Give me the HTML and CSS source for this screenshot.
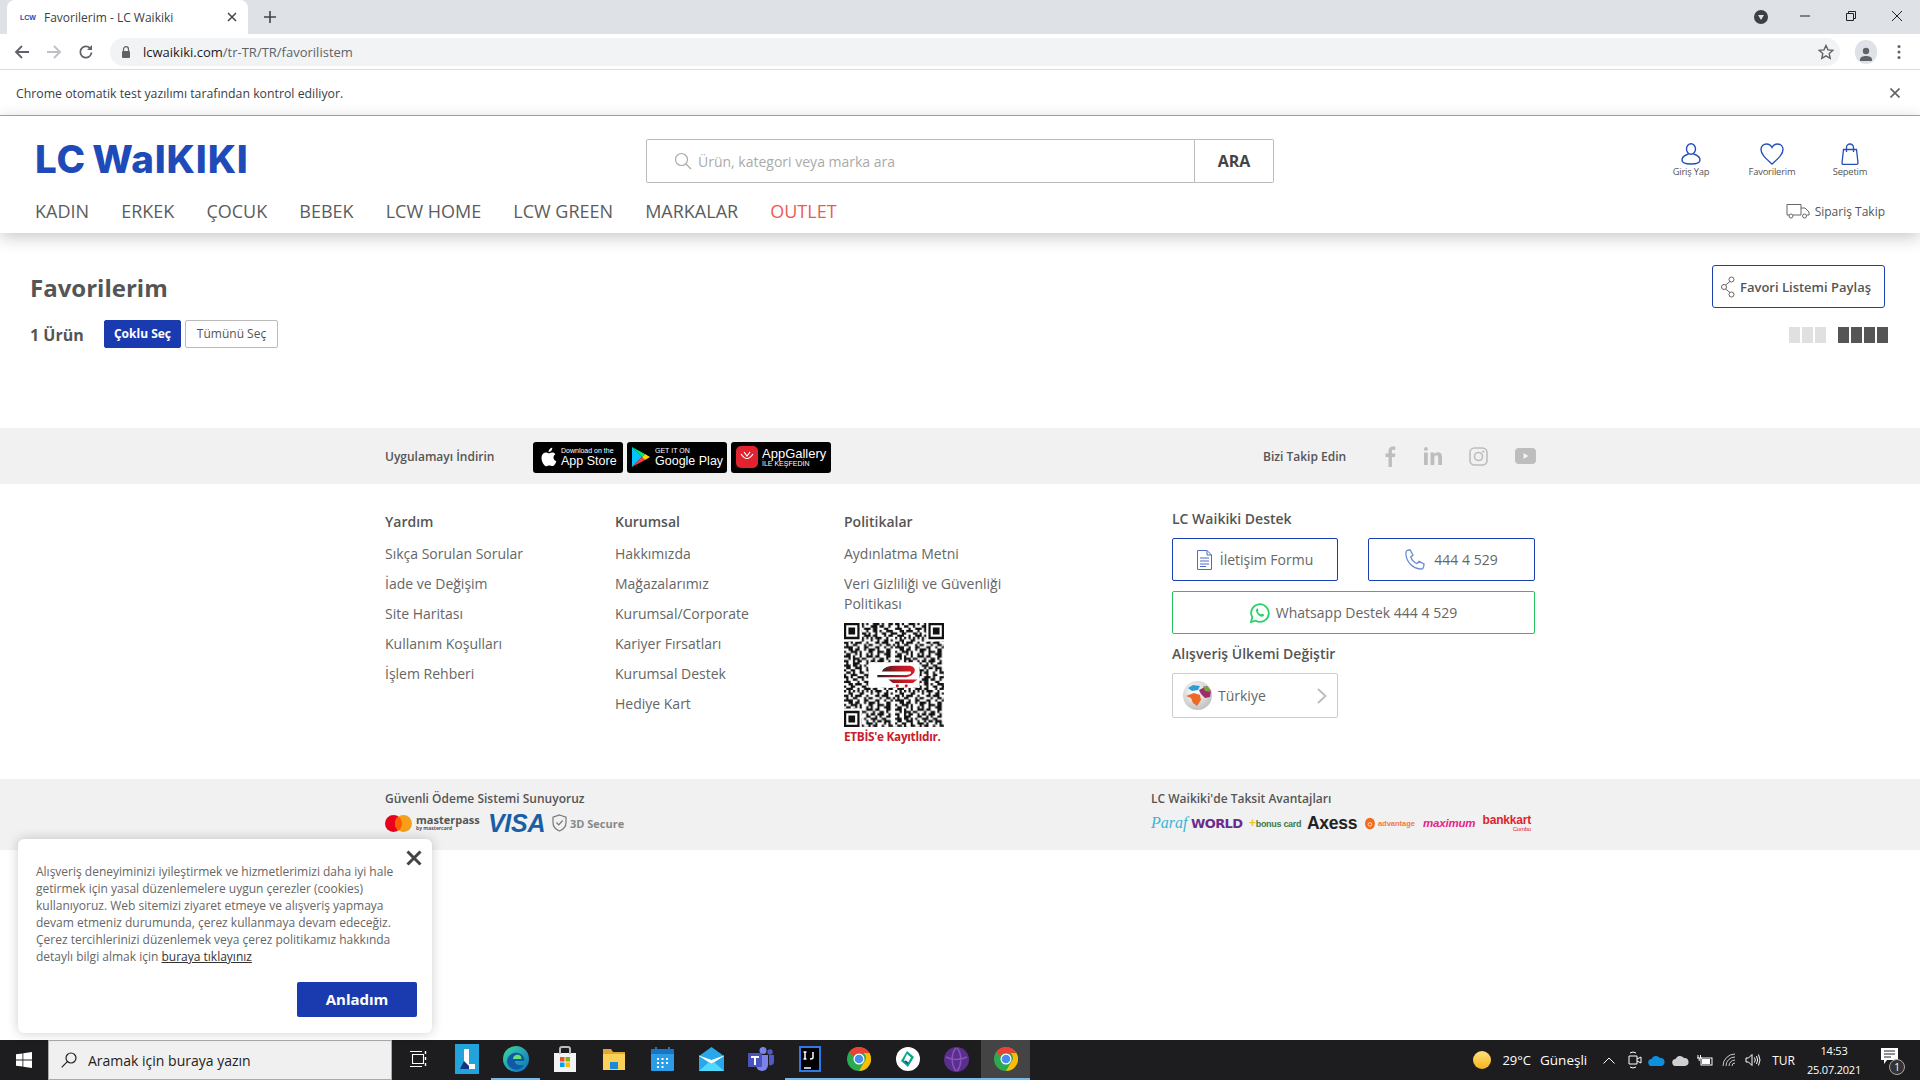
FILE: index.html

```html
<!DOCTYPE html>
<html lang="tr">
<head>
  <meta charset="UTF-8">
  <title>Favorilerim - LC Waikiki</title>
  <link rel="stylesheet" href="styles.css">
</head>
<body>
  <div class="browser">
    <div class="tabstrip">
      <div class="tab">
        <span class="favicon">LCW</span>
        <span class="tab-title">Favorilerim - LC Waikiki</span>
        <svg class="tab-close" width="10" height="10" viewBox="0 0 10 10"><path d="M1 1l8 8M9 1l-8 8" stroke="#444" stroke-width="1.5"/></svg>
      </div>
      <svg class="new-tab" width="12" height="12" viewBox="0 0 12 12"><path d="M6 0v12M0 6h12" stroke="#444" stroke-width="1.6"/></svg>
      <div class="window-btns">
        <svg class="media-btn" width="14" height="14" viewBox="0 0 14 14"><circle cx="7" cy="7" r="7" fill="#3c4043"/><path d="M4 5h6l-3 5z" fill="#dee1e6"/></svg>
        <svg class="win-btn" width="46" height="30" viewBox="0 0 46 30"><path d="M18 15h10" stroke="#222"/></svg>
        <svg class="win-btn" width="46" height="30" viewBox="0 0 46 30"><path d="M18.5 12.5h7v7h-7zM20.5 12.5v-2h7v7h-2" fill="none" stroke="#222"/></svg>
        <svg class="win-btn" width="46" height="30" viewBox="0 0 46 30"><path d="M18 10l10 10M28 10l-10 10" stroke="#222"/></svg>
      </div>
    </div>
    <div class="toolbar">
      <svg width="16" height="16" viewBox="0 0 16 16"><path d="M15 8H2M8 2L2 8l6 6" fill="none" stroke="#5f6368" stroke-width="1.8"/></svg>
      <svg width="16" height="16" viewBox="0 0 16 16"><path d="M1 8h13M8 2l6 6-6 6" fill="none" stroke="#bdc1c6" stroke-width="1.8"/></svg>
      <svg width="16" height="16" viewBox="0 0 16 16"><path d="M13.5 8.5a5.6 5.6 0 1 1-1.6-4.4" fill="none" stroke="#5f6368" stroke-width="1.8"/><path d="M14 1v5H9z" fill="#5f6368"/></svg>
      <div class="omnibox">
        <svg width="10" height="12" viewBox="0 0 10 12"><path d="M2.5 5V3.2a2.5 2.5 0 0 1 5 0V5" fill="none" stroke="#5f6368" stroke-width="1.2"/><rect x="1" y="5" width="8" height="7" rx="1" fill="#5f6368"/></svg>
        <span class="url"><b>lcwaikiki.com</b>/tr-TR/TR/favorilistem</span>
        <svg class="star" width="16" height="16" viewBox="0 0 16 16"><path d="M8 1.5l2 4.4 4.8.5-3.6 3.2 1 4.7L8 11.9l-4.2 2.4 1-4.7L1.200 6.400l4.800-.5z" fill="none" stroke="#5f6368" stroke-width="1.400"/></svg>
      </div>
      <span class="avatar">
        <svg width="14" height="14" viewBox="0 0 14 14"><circle cx="7" cy="4" r="3.200" fill="#5f6368"/><path d="M1 14v-1.500c0-2.500 3-3.500 6-3.500s6 1 6 3.500V14z" fill="#5f6368"/></svg>
      </span>
      <svg class="kebab" width="4" height="16" viewBox="0 0 4 16"><circle cx="2" cy="2.500" r="1.500" fill="#5f6368"/><circle cx="2" cy="8" r="1.500" fill="#5f6368"/><circle cx="2" cy="13.500" r="1.500" fill="#5f6368"/></svg>
    </div>
    <div class="infobar">
      <span>Chrome otomatik test yazılımı tarafından kontrol ediliyor.</span>
      <svg width="10" height="10" viewBox="0 0 10 10"><path d="M.5.5l9 9M9.500.5l-9 9" stroke="#5f6368" stroke-width="1.600"/></svg>
    </div>
  </div>

  <header class="site-header">
    <div class="header-top">
      <a class="logo">LC WaIKIKI</a>
      <form class="search">
        <div class="search-input">
          <svg width="18" height="18" viewBox="0 0 18 18"><circle cx="7.500" cy="7.500" r="6" fill="none" stroke="#aaa" stroke-width="1.200"/><path d="M12 12l5 5" stroke="#aaa" stroke-width="1.200"/></svg>
          <span>Ürün, kategori veya marka ara</span>
        </div>
        <div class="search-btn">ARA</div>
      </form>
      <div class="user-links">
        <a class="user-link">
          <svg width="20" height="22" viewBox="0 0 20 22"><ellipse cx="10" cy="6" rx="4.500" ry="5.200" fill="none" stroke="#2450bb" stroke-width="1.400"/><path d="M7.500 11C3 12.500 1 14.500 1 17c0 3 4 4 9 4s9-1 9-4c0-2.500-2-4.500-6.500-6" fill="none" stroke="#2450bb" stroke-width="1.400"/></svg>
          <span>Giriş Yap</span>
        </a>
        <a class="user-link">
          <svg width="24" height="22" viewBox="0 0 24 22"><path d="M12 21C6 15.500 1 11.500 1 6.500 1 3 3.500 1 6.500 1 9 1 11 2.500 12 4.500 13 2.500 15 1 17.500 1 20.500 1 23 3 23 6.500c0 5-5 9-11 14.500z" fill="none" stroke="#2450bb" stroke-width="1.400"/></svg>
          <span>Favorilerim</span>
        </a>
        <a class="user-link">
          <svg width="18" height="22" viewBox="0 0 18 22"><path d="M2.500 6.500h13L17 20q0 1.300-1.300 1.300H2.300Q1 21.300 1 20zM5.500 9V4.500a3.500 3.500 0 0 1 7 0V9" fill="none" stroke="#2450bb" stroke-width="1.300"/></svg>
          <span>Sepetim</span>
        </a>
      </div>
    </div>
    <div class="header-nav">
      <nav class="main-nav">
        <a>KADIN</a>
        <a>ERKEK</a>
        <a>ÇOCUK</a>
        <a>BEBEK</a>
        <a>LCW HOME</a>
        <a>LCW GREEN</a>
        <a>MARKALAR</a>
        <a class="outlet">OUTLET</a>
      </nav>
      <a class="order-track">
        <svg width="24" height="16" viewBox="0 0 24 16"><path d="M15 12H7M3 12H1V1.500h14V12M15 5h4l4 4v3h-2" fill="none" stroke="#666" stroke-width="1"/><circle cx="5" cy="13" r="2" fill="none" stroke="#666"/><circle cx="18.500" cy="13" r="2" fill="none" stroke="#666"/></svg>
        <span>Sipariş Takip</span>
      </a>
    </div>
  </header>

  <main class="favorites">
    <div class="fav-head">
      <h1>Favorilerim</h1>
      <a class="share-btn">
        <svg width="14" height="22" viewBox="0 0 14 22"><circle cx="10.500" cy="3.500" r="2.500" fill="none" stroke="#666"/><circle cx="3" cy="11" r="2.500" fill="none" stroke="#666"/><circle cx="10.500" cy="18.500" r="2.500" fill="none" stroke="#666"/><path d="M9 5.500L4.500 9M4.500 13L9 16.500" stroke="#666"/></svg>
        <span>Favori Listemi Paylaş</span>
      </a>
    </div>
    <div class="fav-tools">
      <strong class="count">1 Ürün</strong>
      <a class="sel-btn sel-active">Çoklu Seç</a>
      <a class="sel-btn">Tümünü Seç</a>
      <div class="grid-switch">
        <div class="grid-opt"><i></i><i></i><i></i></div>
        <div class="grid-opt grid-on"><i></i><i></i><i></i><i></i></div>
      </div>
    </div>
  </main>

  <section class="band app-band">
    <div class="wrap app-row">
      <span class="band-label">Uygulamayı İndirin</span>
      <div class="stores">
        <a class="store store-apple">
          <svg width="17" height="20" viewBox="0 0 17 20"><path d="M13.500 10.500c0-2.200 1.800-3.200 1.900-3.300-1-1.500-2.600-1.700-3.200-1.700-1.300-.1-2.600.8-3.300.8s-1.700-.8-2.900-.8C4.500 5.500 3.100 6.400 2.300 7.800c-1.600 2.800-.4 6.900 1.100 9.100.8 1.100 1.700 2.300 2.900 2.300 1.200-.1 1.600-.8 3-.8s1.800.8 3 .7c1.300 0 2-1.100 2.800-2.200.9-1.300 1.200-2.500 1.300-2.600-.1 0-2.800-1-2.900-3.800zM11.300 3.800c.6-.8 1.100-1.900 1-3-.9 0-2.100.6-2.700 1.400-.6.700-1.100 1.800-1 2.800 1 .1 2-.5 2.700-1.200z" fill="#fff"/></svg>
          <span><small>Download on the</small><b>App Store</b></span>
        </a>
        <a class="store store-google">
          <svg width="20" height="22" viewBox="0 0 20 22"><path d="M1 1l10 10L1 21z" fill="#00c3ff"/><path d="M1 1l13 7-3 3z" fill="#00e676"/><path d="M1 21l13-7-3-3z" fill="#ff3a44"/><path d="M14 8l5 3-5 3-3-3z" fill="#ffd400"/></svg>
          <span><small>GET IT ON</small><b>Google Play</b></span>
        </a>
        <a class="store store-huawei">
          <svg width="22" height="22" viewBox="0 0 22 22"><rect width="22" height="22" rx="5" fill="#e0232e"/><path d="M5 8q6 9 12 0M8 6l3 4 3-4" fill="none" stroke="#fff" stroke-width="1.200"/></svg>
          <span><b>AppGallery</b><small>İLE KEŞFEDİN</small></span>
        </a>
      </div>
      <span class="band-label follow">Bizi Takip Edin</span>
      <div class="socials">
        <svg width="12" height="21" viewBox="0 0 12 21"><path d="M3.500 21V11H.500V7.500h3V5c0-3 1.700-4.500 4.300-4.500 1.200 0 2.200.1 2.500.1v3.100H8.500C7.100 3.700 6.900 4.400 6.900 5.400v2.100h3.500L10 11H6.900v10z" fill="#bdbdbd"/></svg>
        <svg width="18" height="18" viewBox="0 0 18 18"><rect y="5.500" width="3.800" height="12.500" fill="#bdbdbd"/><circle cx="1.900" cy="1.900" r="1.900" fill="#bdbdbd"/><path d="M6.500 5.500h3.600v1.700c.6-1 1.900-2 3.800-2 3.400 0 4.100 2.300 4.100 5.200V18h-3.800v-6.700c0-1.500-.1-3-1.800-3s-2.100 1.400-2.100 2.900V18H6.500z" fill="#bdbdbd"/></svg>
        <svg width="19" height="19" viewBox="0 0 19 19"><rect x="1" y="1" width="17" height="17" rx="4.500" fill="none" stroke="#bdbdbd" stroke-width="1.600"/><circle cx="9.500" cy="9.500" r="4" fill="none" stroke="#bdbdbd" stroke-width="1.600"/><circle cx="14.300" cy="4.700" r="1.100" fill="#bdbdbd"/></svg>
        <svg width="21" height="16" viewBox="0 0 21 16"><rect width="21" height="16" rx="4" fill="#bdbdbd"/><path d="M8.500 5l5 3-5 3z" fill="#f1f1f1"/></svg>
      </div>
    </div>
  </section>

  <footer class="wrap footer-links">
    <div class="link-col">
      <h4>Yardım</h4>
      <a>Sıkça Sorulan Sorular</a>
      <a>İade ve Değişim</a>
      <a>Site Haritası</a>
      <a>Kullanım Koşulları</a>
      <a>İşlem Rehberi</a>
    </div>
    <div class="link-col">
      <h4>Kurumsal</h4>
      <a>Hakkımızda</a>
      <a>Mağazalarımız</a>
      <a>Kurumsal/Corporate</a>
      <a>Kariyer Fırsatları</a>
      <a>Kurumsal Destek</a>
      <a>Hediye Kart</a>
    </div>
    <div class="link-col policy-col">
      <h4>Politikalar</h4>
      <a>Aydınlatma Metni</a>
      <a>Veri Gizliliği ve Güvenliği Politikası</a>
      <svg class="qr" width="100" height="104" viewBox="0 0 45 45" preserveAspectRatio="none">
        <defs>
          <pattern id="qr-noise" width="23" height="23" patternUnits="userSpaceOnUse">
            <path fill="none" stroke="#111" d="M0 .5h2m1 0h1m2 0h3m1 0h1m2 0h3m1 0h1m2 0h2M1 1.500h1m2 0h2m2 0h1m3 0h3m1 0h2m2 0h1M0 2.500h3m3 0h1m2 0h3m1 0h2m3 0h2M2 3.500h2m1 0h3m2 0h1m2 0h2m1 0h1m2 0h3M0 4.500h1m2 0h2m3 0h2m1 0h1m2 0h1m2 0h2m2 0h2M1 5.500h3m2 0h1m2 0h3m1 0h2m3 0h1m1 0h2M0 6.500h1m1 0h1m1 0h1m1 0h1m1 0h1m1 0h1m1 0h1m1 0h3m2 0h1M2 7.500h2m3 0h2m3 0h1m2 0h1m2 0h2m1 0h1M0 8.500h2m1 0h1m1 0h3m2 0h1m3 0h2m1 0h3M1 9.500h1m2 0h2m3 0h1m1 0h2m3 0h1m2 0h2m1 0h1M0 10.500h4m2 0h1m2 0h2m3 0h2m2 0h1m2 0h1M2 11.500h2m1 0h2m2 0h1m1 0h3m1 0h1m3 0h2M0 12.500h1m2 0h3m1 0h1m3 0h2m2 0h3m1 0h2M1 13.500h2m2 0h1m1 0h1m2 0h1m1 0h1m2 0h1m2 0h3M0 14.500h3m1 0h1m2 0h1m2 0h3m1 0h2m3 0h2M2 15.500h1m1 0h3m1 0h2m3 0h1m2 0h2m1 0h1M0 16.500h2m2 0h1m1 0h2m2 0h1m1 0h2m1 0h3m2 0h1M1 17.500h1m2 0h3m3 0h2m2 0h1m1 0h1m2 0h2M0 18.500h3m1 0h2m1 0h1m1 0h1m2 0h3m2 0h2M1 19.500h2m2 0h3m2 0h1m2 0h1m1 0h2m1 0h3M0 20.500h1m2 0h2m2 0h1m2 0h3m1 0h1m3 0h1m1 0h1M1 21.500h2m1 0h1m2 0h2m2 0h1m1 0h2m2 0h1m2 0h2M0 22.500h1m2 0h3m3 0h3m2 0h1m2 0h2m3 0h1"/>
          </pattern>
          <linearGradient id="qr-red" x1="0" y1="0" x2="1" y2="0"><stop offset="0" stop-color="#222"/><stop offset=".55" stop-color="#b01822"/><stop offset="1" stop-color="#e01f2c"/></linearGradient>
        </defs>
        <rect width="45" height="45" fill="url(#qr-noise)"/>
        <path fill="#fff" d="M0 0h8v8H0zM37 0h8v8h-8zM0 37h8v8H0zM11 17h23v11H11z"/>
        <path fill="#111" fill-rule="evenodd" d="M0 0h7v7H0zM1 1v5h5V1zM2 2h3v3H2zM38 0h7v7h-7zM39 1v5h5V1zM40 2h3v3h-3zM0 38h7v7H0zM1 39v5h5v-5zM2 40h3v3H2z"/>
        <path fill="url(#qr-red)" d="M15 22.500h13c2 0 2.500-1 2-1.500H17q1-2.500 6-2.500h6c4 0 4 4-1 5H15zM20 24.500h13l-2 1.500H22z"/>
        <circle cx="24" cy="27.200" r=".7" fill="#c8202c"/><circle cx="28" cy="27.200" r=".7" fill="#c8202c"/>
      </svg>
      <span class="etbis">ETBİS'e Kayıtlıdır.</span>
    </div>
    <div class="support-col">
      <h4>LC Waikiki Destek</h4>
      <div class="support-btns">
        <a class="support-btn">
          <svg width="15" height="20" viewBox="0 0 15 20"><path d="M.500.500h9.500l4.500 4.500v14.500H.500z" fill="#fff" stroke="#4a6cc8"/><path d="M10 .5V5h4.500M3 8h9M3 11h9M3 14h9M3 16.500h6" fill="none" stroke="#4a6cc8"/></svg>
          <span>İletişim Formu</span>
        </a>
        <a class="support-btn">
          <svg width="21" height="21" viewBox="0 0 21 21"><path d="M2 1.500l3-.7 3 5.200-2.300 2c1 2.700 3.600 5.500 6.300 6.600l2.100-2.300 5 2.900-.6 3c-.4 1.300-1.500 2-3 1.800C7.500 19.500 1.500 13 .9 5 .8 3.400.900 2 2 1.500z" fill="none" stroke="#6c8ad6" stroke-width="1.300"/></svg>
          <span>444 4 529</span>
        </a>
      </div>
      <a class="support-btn whatsapp">
        <svg width="20" height="20" viewBox="0 0 20 20"><path d="M1 19l1.300-4.700A8.800 8.800 0 1 1 5.700 17.700z" fill="#fff" stroke="#25d366" stroke-width="1.800"/><path d="M7 5.500c-1.500 1-1.300 3 .3 5.200 1.600 2.200 3.900 3.500 5.400 2.900 1-.4 1.500-1.300 1.300-1.800l-2-1.200-1 1c-1.300-.5-2.600-1.800-3.200-3.100l.8-1-1-2.200c-.2-.1-.4-.1-.6.2z" fill="#25d366"/></svg>
        <span>Whatsapp Destek 444 4 529</span>
      </a>
      <h4 class="country-title">Alışveriş Ülkemi Değiştir</h4>
      <a class="country-btn">
        <svg width="29" height="29" viewBox="0 0 29 29"><defs><radialGradient id="globe" cx="40%" cy="35%" r="75%"><stop offset="0" stop-color="#fff"/><stop offset="1" stop-color="#b9b9b9"/></radialGradient></defs><circle cx="14.500" cy="14.500" r="14.500" fill="url(#globe)"/><path d="M3 15l8-3 6 2 1 5-4 6-4-3-2-5z" fill="#ee6a24"/><path d="M16 9l8-4 4 5-1 6-5 1-4-4z" fill="#a12a6a"/><path d="M5 7l5-3 7 1-2 4-6 1z" fill="#2f9ad8"/><path d="M20 5l5 1 3 5-6-1z" fill="#6fa83c"/></svg>
        <span>Türkiye</span>
        <svg class="chev" width="10" height="16" viewBox="0 0 10 16"><path d="M1 1l7.500 7L1 15" fill="none" stroke="#bbb" stroke-width="1.800"/></svg>
      </a>
    </div>
  </footer>

  <section class="band pay-band">
    <div class="wrap pay-row">
      <div>
        <span class="band-label">Güvenli Ödeme Sistemi Sunuyoruz</span>
        <div class="pay-logos">
          <svg class="mc" width="27" height="17" viewBox="0 0 27 17"><circle cx="8.500" cy="8.500" r="8.500" fill="#eb001b"/><circle cx="18.500" cy="8.500" r="8.500" fill="#f79e1b"/><path d="M13.500 1.600a8.500 8.500 0 0 1 0 13.800 8.500 8.500 0 0 1 0-13.800z" fill="#ff5f00"/></svg>
          <span class="masterpass">masterpass<small>by mastercard</small></span>
          <span class="visa">VISA</span>
          <svg width="15" height="18" viewBox="0 0 15 18"><path d="M7.500 1L14 3.200v5.500c0 4-3 6.800-6.500 8.300C4 15.500 1 12.700 1 8.700V3.200z" fill="none" stroke="#777" stroke-width="1.200"/><path d="M4.500 8.500l2.200 2.300 4-4.300" fill="none" stroke="#777" stroke-width="1.200"/></svg>
          <span class="secure">3D Secure</span>
        </div>
      </div>
      <div>
        <span class="band-label">LC Waikiki'de Taksit Avantajları</span>
        <div class="bank-logos">
          <span class="bank paraf">Paraf</span>
          <span class="bank world">WORLD</span>
          <span class="bank bonus"><i>+</i>bonus card</span>
          <span class="bank axess">Axess</span>
          <span class="bank advantage"><svg width="11" height="13" viewBox="0 0 11 13"><ellipse cx="5.500" cy="6.500" rx="5.500" ry="6.500" fill="#f26b21"/><circle cx="5.500" cy="7.500" r="2" fill="none" stroke="#ffe9b0"/></svg>advantage</span>
          <span class="bank maximum">maximum</span>
          <span class="bank bankkart">bankkart<small>Combo</small></span>
        </div>
      </div>
    </div>
  </section>

  <div class="cookie">
    <svg class="cookie-close" width="16" height="16" viewBox="0 0 16 16"><path d="M1.500 1.500l13 13M14.500 1.500l-13 13" stroke="#444" stroke-width="3"/></svg>
    <p>Alışveriş deneyiminizi iyileştirmek ve hizmetlerimizi daha iyi hale getirmek için yasal düzenlemelere uygun çerezler (cookies) kullanıyoruz. Web sitemizi ziyaret etmeye ve alışveriş yapmaya devam etmeniz durumunda, çerez kullanmaya devam edeceğiz. Çerez tercihlerinizi düzenlemek veya çerez politikamız hakkında detaylı bilgi almak için <a>buraya tıklayınız</a></p>
    <a class="cookie-ok">Anladım</a>
  </div>

  <div class="taskbar">
    <span class="start">
      <svg width="16" height="16" viewBox="0 0 16 16"><path d="M0 2.300l6.500-.9v6.200H0zM7.300 1.300L16 0v7.600H7.300zM0 8.400h6.500v6.200L0 13.700zM7.300 8.400H16V16l-8.700-1.200z" fill="#fff"/></svg>
    </span>
    <div class="task-search">
      <svg width="16" height="16" viewBox="0 0 16 16"><circle cx="10" cy="6" r="5" fill="none" stroke="#222" stroke-width="1.200"/><path d="M6.300 9.700L.7 15.300" stroke="#222" stroke-width="1.200"/></svg>
      <span>Aramak için buraya yazın</span>
    </div>
    <div class="task-icons">
      <span class="task-item"><svg width="18" height="18" viewBox="0 0 18 18"><path d="M3.500 4.500h11v9h-11zM1 1.500h12M1 16.500h12" fill="none" stroke="#fff" stroke-width="1.100"/><path d="M16.500 1v3M16.500 7v3M16.500 13v3" stroke="#fff" stroke-width="1.400"/></svg></span>
      <span class="task-item"><svg width="24" height="30" viewBox="0 0 24 30"><rect width="24" height="30" fill="#23a3db"/><path d="M9 5h5v15h6v5H9z" fill="#fff"/><path d="M9 17l-4 8h9v-3z" fill="#13357d"/></svg></span>
      <span class="task-item run"><svg width="26" height="26" viewBox="0 0 26 26"><defs><linearGradient id="edge" x1="0" y1="0" x2="1" y2="1"><stop offset="0" stop-color="#3ed6a0"/><stop offset="1" stop-color="#0c6fc0"/></linearGradient></defs><circle cx="13" cy="13" r="13" fill="url(#edge)"/><path d="M4 15C5 8 11 6 15 7c5 1 7 5 6 8h-9c0 3 3 5 9 4-3 5-9 6-13 3-3-2-4-5-4-7z" fill="#0f5aa8"/><path d="M10 13c0-3 3-5 6-4 2 .6 3 2.500 2 4z" fill="#6be07a"/></svg></span>
      <span class="task-item"><svg width="24" height="26" viewBox="0 0 24 26"><path d="M1 7h22v19H1z" fill="#f3f3f3"/><path d="M7 8V3q0-2 2-2h6q2 0 2 2v5" fill="none" stroke="#bbb" stroke-width="2"/><rect x="7" y="11" width="4.500" height="4.500" fill="#f25022"/><rect x="12.500" y="11" width="4.500" height="4.500" fill="#7fba00"/><rect x="7" y="16.500" width="4.500" height="4.500" fill="#00a4ef"/><rect x="12.500" y="16.500" width="4.500" height="4.500" fill="#ffb900"/></svg></span>
      <span class="task-item"><svg width="24" height="22" viewBox="0 0 24 22"><path d="M1 1h8l2 3h12v18H1z" fill="#e2a72e"/><path d="M1 6h22v16H1z" fill="#fbd157"/><path d="M8 21v-7h8v7z" fill="#1b88d8"/></svg></span>
      <span class="task-item"><svg width="23" height="24" viewBox="0 0 23 24"><rect y="2" width="23" height="22" rx="1" fill="#2b9de8"/><rect y="2" width="23" height="5" fill="#1a74c4"/><path d="M5 0v4M18 0v4" stroke="#1a74c4" stroke-width="2"/><path d="M6 11h2v2H6zM10.500 11h2v2h-2zM15 11h2v2h-2zM6 15h2v2H6zM10.500 15h2v2h-2zM15 15h2v2h-2zM6 19h2v2H6zM10.500 19h2v2h-2z" fill="#fff"/></svg></span>
      <span class="task-item"><svg width="25" height="24" viewBox="0 0 25 24"><path d="M0 9L12.500 0 25 9v15H0z" fill="#28a8ea"/><path d="M0 9l12.500 8L25 9v-.5L12.500 13 0 8.500z" fill="#fff"/><path d="M0 24l10-9 2.500 1.500L15 15l10 9z" fill="#50d9ff"/></svg></span>
      <span class="task-item"><svg width="26" height="24" viewBox="0 0 26 24"><circle cx="15" cy="3.500" r="3.500" fill="#7b83eb"/><circle cx="22" cy="5" r="2.700" fill="#5059c9"/><path d="M8 8h12v10a6 6 0 0 1-12 0z" fill="#7b83eb"/><path d="M21 8h5v7a3.500 3.500 0 0 1-5 3z" fill="#5059c9"/><rect y="6" width="14" height="14" rx="1" fill="#4b53bc"/><path d="M3 9h8v2H8v7H6v-7H3z" fill="#fff"/></svg></span>
      <span class="task-item run"><svg width="22" height="26" viewBox="0 0 22 26"><rect width="22" height="26" fill="#2d79e6"/><rect x="2" y="2" width="18" height="22" fill="#000"/><path d="M5 22h7" stroke="#fff" stroke-width="1.500"/><path d="M6 6v7M4.500 6h3M4.500 13h3M14 6v5.500q0 1.500-3 1.500" fill="none" stroke="#fff" stroke-width="1.500"/></svg></span>
      <span class="task-item run"><svg width="24" height="24" viewBox="0 0 24 24"><use href="#chrome-mark"/></svg></span>
      <span class="task-item run"><svg width="24" height="24" viewBox="0 0 24 24"><circle cx="12" cy="12" r="12" fill="#fff"/><path d="M11 4l7 6-6 10-7-6z" fill="#0fa68a"/><path d="M11 7l4 3.500-3.500 6L8 13.500z" fill="#fff"/><path d="M9 14l3 2.500" stroke="#2447b5" stroke-width="2"/></svg></span>
      <span class="task-item run"><svg width="25" height="25" viewBox="0 0 25 25"><circle cx="12.500" cy="12.500" r="12.500" fill="#5a2e8c"/><path d="M12 1c-5 5-5 17 0 23M13 1c5 5 5 17 0 23M2 10q10 5 21 0" fill="none" stroke="#8653b8" stroke-width="1.600"/></svg></span>
      <span class="task-item run active"><svg width="24" height="24" viewBox="0 0 24 24"><g id="chrome-mark"><circle cx="12" cy="12" r="12" fill="#2da94f"/><path d="M12 0a12 12 0 0 1 10.400 6H12a6 6 0 0 0-5.500 3.400L2.300 5A12 12 0 0 1 12 0z" fill="#ea4335"/><path d="M22.400 6A12 12 0 0 1 12 24l5.200-9a6 6 0 0 0-.5-9z" fill="#fbbc05"/><circle cx="12" cy="12" r="5.500" fill="#fff"/><circle cx="12" cy="12" r="4.300" fill="#4a8cf0"/></g></svg></span>
    </div>
    <div class="tray">
      <span class="sun"></span>
      <span class="weather">29°C</span>
      <span class="weather sunny">Güneşli</span>
      <svg class="tray-icon tray-chevron" width="12" height="7" viewBox="0 0 12 7"><path d="M.5 6.500L6 1l5.500 5.500" fill="none" stroke="#fff" stroke-width="1"/></svg>
      <svg class="tray-icon tray-camera" width="14" height="18" viewBox="0 0 14 18"><path d="M1 5h8v8H1zM9 8l4-2v6l-4-2M2 2q3-2 6 0M2 16q3 2 6 0" fill="none" stroke="#fff"/></svg>
      <svg class="tray-icon tray-cloud" width="17" height="11" viewBox="0 0 17 11"><path d="M4 11a3.500 3.500 0 0 1-.5-7A5 5 0 0 1 12 3a4 4 0 0 1 1 8z" fill="#0f8fe0"/></svg>
      <svg class="tray-icon tray-grey" width="17" height="11" viewBox="0 0 17 11"><path d="M4 11a3.500 3.500 0 0 1-.5-7A5 5 0 0 1 12 3a4 4 0 0 1 1 8z" fill="#cfcfcf"/></svg>
      <svg class="tray-icon" width="16" height="11" viewBox="0 0 16 11"><path d="M1 0v3M3.500 0v3M0 3h4.500M2.200 3v3" stroke="#fff"/><rect x="4" y="3" width="11" height="7" fill="none" stroke="#fff"/><rect x="5" y="4" width="8" height="5" fill="#fff"/></svg>
      <svg class="tray-icon" width="14" height="14" viewBox="0 0 14 14"><path d="M1 13a12 12 0 0 1 12-12M4 13a9 9 0 0 1 9-9M7 13a6 6 0 0 1 6-6M10 13a3 3 0 0 1 3-3" fill="none" stroke="#ddd" stroke-width=".9"/></svg>
      <svg class="tray-icon" width="16" height="14" viewBox="0 0 16 14"><path d="M1 5h2.500L7 1.500v11L3.500 9H1zM9.500 4.500q1.500 2.500 0 5M11.500 3q2.300 4 0 8M13.500 1.500q3 5.500 0 11" fill="none" stroke="#fff"/></svg>
      <span class="lang">TUR</span>
      <span class="clock">14:53<br>25.07.2021</span>
      <span class="notif">
        <svg width="17" height="16" viewBox="0 0 17 16"><path d="M0 0h17v12H6l-3 4v-4H0z" fill="#fff"/><path d="M3 3h11M3 6h11M3 9h7" stroke="#222"/></svg>
        <em>1</em>
      </span>
    </div>
  </div>
</body>
</html>
```

FILE: styles.css

```css
* { box-sizing: border-box; }

html, body {
  margin: 0;
  height: 1080px;
  overflow: hidden;
}

body {
  position: relative;
  display: flex;
  flex-direction: column;
  font-family: "Open Sans", sans-serif;
  color: #555;
  background: #fff;
}

a { color: inherit; text-decoration: none; }
h1, h4, p { margin: 0; }

/* browser chrome */
.tabstrip {
  display: flex;
  align-items: flex-end;
  height: 34px;
  padding-left: 7px;
  background: #dee1e6;
}
.tab {
  display: flex;
  align-items: center;
  width: 241px;
  height: 34px;
  padding: 0 11px 0 13px;
  border-radius: 8px 8px 0 0;
  background: #fff;
}
.favicon {
  width: 24px;
  font: bold 7px "Liberation Sans", sans-serif;
  color: #1d4ab5;
}
.tab-title {
  flex: 1;
  font-size: 12px;
  color: #3c4043;
}
.new-tab { margin: 0 0 11px 16px; }
.window-btns {
  display: flex;
  align-items: flex-start;
  align-self: flex-start;
  margin-left: auto;
}
.media-btn { margin: 10px 14px 0 0; }
.win-btn { margin-top: 1px; }

.toolbar {
  display: flex;
  align-items: center;
  gap: 16px;
  height: 36px;
  padding: 0 19px 0 14px;
  border-bottom: 1px solid #dadce0;
}
.omnibox {
  display: flex;
  align-items: center;
  flex: 1;
  height: 28px;
  margin-right: -1px;
  padding: 0 6px 0 11px;
  border-radius: 14px;
  background: #f1f3f4;
}
.url {
  margin-left: 12px;
  font-size: 13px;
  color: #5f6368;
}
.url b { font-weight: 400; color: #202124; }
.star { margin-left: auto; }
.avatar {
  display: flex;
  justify-content: center;
  align-items: flex-end;
  width: 22px;
  height: 24px;
  padding-bottom: 3px;
  border-radius: 11px;
  background: #dee1e6;
}
.kebab { margin-left: 4px; }

.infobar {
  display: flex;
  justify-content: space-between;
  align-items: center;
  height: 46px;
  padding: 1px 20px 0 16px;
  font-size: 12.3px;
  color: #3c4043;
  border-bottom: 1px solid #a8a8a8;
}

/* site header */
.site-header {
  position: relative;
  z-index: 2;
  height: 117px;
  padding: 23px 30px 0 35px;
  background: #fff;
  box-shadow: 0 4px 16px rgba(0, 0, 0, .22);
}
.header-top { display: flex; height: 44px; }
.logo {
  width: 611px;
  font: 800 38.5px/40px "Inter", sans-serif;
  letter-spacing: .8px;
  word-spacing: -3px;
  color: #1f4bb8;
}
.search { display: flex; width: 628px; }
.search-input {
  display: flex;
  align-items: center;
  gap: 6px;
  flex: 1;
  padding-left: 27px;
  border: 1px solid #bbb;
  border-radius: 2px 0 0 2px;
  font-size: 14px;
  color: #aaa;
}
.search-btn {
  width: 79px;
  border: 1px solid #bbb;
  border-left: 0;
  border-radius: 0 2px 2px 0;
  font-size: 16px;
  font-weight: 700;
  line-height: 42px;
  text-align: center;
  color: #444;
}
.user-links { display: flex; margin-left: auto; }
.user-link {
  display: flex;
  flex-direction: column;
  align-items: center;
  width: 80px;
  margin-top: 4px;
  font-size: 9.4px;
  line-height: 13px;
  letter-spacing: -.2px;
}
.user-link:nth-child(1) { width: 86px; }
.user-link:nth-child(2) { width: 76px; }

.header-nav {
  display: flex;
  justify-content: space-between;
  align-items: center;
  height: 24px;
  margin-top: 16px;
}
.main-nav {
  display: flex;
  gap: 32.1px;
  font-size: 18px;
  color: #5c5c5c;
}
.outlet { color: #ee5a52; }
.order-track {
  display: flex;
  align-items: center;
  gap: 5px;
  margin-right: 5px;
  font-size: 12px;
}

/* favorites */
.favorites {
  height: 195px;
  padding: 32px 32px 0 30px;
}
.fav-head {
  display: flex;
  justify-content: space-between;
  align-items: center;
  height: 43px;
}
.fav-head h1 {
  padding-top: 2px;
  font-size: 24px;
  font-weight: 700;
  color: #555;
}
.share-btn {
  display: flex;
  align-items: center;
  gap: 5px;
  width: 173px;
  height: 43px;
  margin-right: 3px;
  padding-left: 8px;
  border: 1px solid #1b3fb0;
  border-radius: 3px;
  font-size: 13px;
  font-weight: 600;
}
.fav-tools {
  display: flex;
  align-items: center;
  height: 28px;
  margin-top: 12px;
}
.count {
  width: 74px;
  padding-top: 2px;
  font-size: 16px;
  font-weight: 700;
}
.sel-btn {
  width: 93px;
  height: 28px;
  margin-right: 4px;
  border: 1px solid #bbb;
  border-radius: 2px;
  font-size: 12px;
  line-height: 26px;
  text-align: center;
}
.sel-active {
  width: 77px;
  border-color: #1a3bb0;
  background: #1a3bb0;
  font-weight: 700;
  color: #fff;
}
.grid-switch {
  display: flex;
  gap: 12px;
  margin-top: 2px;
  margin-left: auto;
}
.grid-opt { display: flex; gap: 2px; }
.grid-opt i {
  width: 11px;
  height: 16px;
  background: #e0e0e0;
}
.grid-on i { background: #555; }

/* footer */
.band { background: #f1f1f1; }
.wrap {
  width: 1150px;
  margin: 0 auto;
}
.band-label {
  font-size: 12px;
  font-weight: 600;
}
.app-band { height: 56px; }
.app-row {
  display: flex;
  align-items: center;
  height: 56px;
}
.app-row > .band-label:first-child { width: 148px; }
.stores { display: flex; gap: 4px; margin-top: 2px; }
.store {
  display: flex;
  align-items: center;
  gap: 4px;
  width: 90px;
  height: 31px;
  padding-left: 7px;
  border-radius: 3px;
  background: #000;
  color: #fff;
  font-family: "Liberation Sans", sans-serif;
}
.store span { display: flex; flex-direction: column; }
.store small { font-size: 7px; line-height: 8px; }
.store b { font-size: 12.5px; line-height: 13px; font-weight: 400; }
.store-google { width: 100px; padding-left: 4px; }
.store-google b { font-size: 12.5px; }
.store-huawei { width: 100px; padding-left: 5px; }
.store-huawei b { font-size: 13px; }
.follow { margin-left: auto; width: 122px; }
.socials {
  display: flex;
  align-items: center;
  gap: 27px;
  margin-right: -1px;
}

.footer-links {
  display: grid;
  grid-template-columns: 230px 229px 328px 363px;
  height: 295px;
  padding-top: 28px;
}
.link-col {
  display: flex;
  flex-direction: column;
  align-items: flex-start;
  gap: 10px;
  font-size: 14px;
  line-height: 20px;
}
.link-col h4 {
  margin-bottom: 2px;
  font-size: 14px;
  font-weight: 600;
}
.link-col a { color: #666; }
.policy-col a { max-width: 190px; }
.qr { margin-top: -1px; }
.etbis {
  margin-top: -8px;
  width: 100px;
  font-size: 11.8px;
  font-weight: 700;
  line-height: 14px;
  letter-spacing: -.3px;
  white-space: nowrap;
  color: #c8202c;
}

.support-col { margin-top: -3px; }
.support-col h4 {
  font-size: 14px;
  font-weight: 600;
  line-height: 20px;
}
.support-btns {
  display: grid;
  grid-template-columns: 166px 167px;
  gap: 30px;
  margin-top: 9px;
}
.support-btn {
  display: flex;
  justify-content: center;
  align-items: center;
  gap: 8px;
  height: 43px;
  border: 1px solid #1b3fb0;
  border-radius: 2px;
  font-size: 14px;
  color: #666;
}
.whatsapp {
  gap: 6px;
  margin-top: 10px;
  border-color: #25c45f;
}
.support-col .country-title { margin-top: 10px; }
.country-btn {
  display: flex;
  align-items: center;
  gap: 6px;
  width: 166px;
  height: 45px;
  margin-top: 9px;
  padding: 0 10px;
  border: 1px solid #ccc;
  border-radius: 2px;
  font-size: 14px;
  color: #666;
}
.chev { margin-left: auto; }

.pay-band {
  height: 71px;
  padding-top: 11px;
}
.pay-row {
  display: grid;
  grid-template-columns: 766px 1fr;
}
.pay-row .band-label { display: block; line-height: 18px; }
.pay-logos, .bank-logos {
  display: flex;
  align-items: center;
  height: 24px;
  margin-top: 3px;
}
.masterpass {
  display: flex;
  flex-direction: column;
  width: 69px;
  margin-left: 4px;
  font-size: 11px;
  font-weight: 700;
  line-height: 10px;
  color: #555;
}
.masterpass small { font-size: 5px; line-height: 6px; }
.visa {
  width: 64px;
  margin-left: 3px;
  font: italic bold 25px/24px "Liberation Sans", sans-serif;
  letter-spacing: -.3px;
  color: #1a5ea8;
}
.secure {
  margin-left: 3px;
  font-size: 11px;
  font-weight: 700;
  color: #888;
}
.bank-logos { gap: 8px; }
.bank {
  display: flex;
  flex-direction: column;
  justify-content: center;
  width: 50px;
  height: 24px;
  font-family: "Liberation Sans", sans-serif;
  font-weight: 700;
  white-space: nowrap;
}
.paraf { width: 32px; font: italic 16px "Liberation Serif", serif; color: #38b6d8; }
.world { font-size: 13px; font-family: "DejaVu Sans", sans-serif; font-weight: 700; letter-spacing: -.6px; color: #6a2c91; }
.bonus { display: block; font-size: 9px; letter-spacing: -.3px; line-height: 24px; color: #3d7a4b; }
.bonus i { font-style: normal; font-size: 12px; color: #e8c81f; }
.axess { font-size: 17.5px; letter-spacing: -.3px; color: #222; }
.advantage { flex-direction: row; align-items: center; justify-content: flex-start; gap: 3px; font-size: 7.5px; color: #f2793a; }
.maximum { font-size: 11.5px; font-style: italic; letter-spacing: -.2px; color: #e8238a; }
.bankkart { align-items: flex-end; font-size: 12px; line-height: 11px; letter-spacing: -.2px; color: #e0232e; }
.bankkart small { font-size: 6px; line-height: 6px; font-weight: 400; }

/* cookie popup */
.cookie {
  position: absolute;
  left: 18px;
  top: 839px;
  z-index: 3;
  width: 414px;
  height: 194px;
  padding: 24px 18px 0;
  border-radius: 6px;
  background: #fff;
  box-shadow: 0 0 12px rgba(0, 0, 0, .2);
}
.cookie p {
  font-size: 12px;
  line-height: 17px;
  color: #666;
}
.cookie p a { color: #333; text-decoration: underline; }
.cookie-close {
  position: absolute;
  right: 10px;
  top: 11px;
}
.cookie-ok {
  position: absolute;
  right: 15px;
  bottom: 16px;
  width: 120px;
  height: 35px;
  border-radius: 2px;
  background: #1a3bb0;
  font-size: 15px;
  font-weight: 700;
  line-height: 35px;
  text-align: center;
  color: #fff;
}

/* windows taskbar */
.taskbar {
  display: flex;
  align-items: stretch;
  height: 40px;
  margin-top: auto;
  background: #1d1d1f;
  color: #fff;
}
.start {
  display: flex;
  justify-content: center;
  align-items: center;
  width: 48px;
}
.task-search {
  display: flex;
  align-items: center;
  gap: 11px;
  width: 344px;
  padding-left: 12px;
  border: 1px solid #aaa;
  background: #f0f0f0;
  font-size: 14px;
  color: #222;
}
.task-icons { display: flex; margin-left: 1px; }
.task-item {
  display: flex;
  justify-content: center;
  align-items: center;
  width: 49px;
  border-bottom: 2px solid transparent;
}
.task-item.run { border-bottom-color: #76b9ed; }
.task-item.active { background: #444; }
.tray {
  display: flex;
  align-items: center;
  margin-left: auto;
  padding-right: 12px;
  font-size: 12px;
}
.sun {
  width: 18px;
  height: 18px;
  border-radius: 50%;
  background: linear-gradient(#ffe27a, #f7b21e);
}
.weather { margin-left: 11px; font-size: 13px; }
.sunny { margin-left: 9px; margin-right: 16px; font-size: 13.5px; }
.tray-icon { margin-right: 9px; }
.tray-chevron { margin-right: 13px; }
.tray-camera { margin-right: 6px; }
.tray-cloud { margin-right: 7px; }
.tray-grey { margin-right: 8px; }
.lang { margin-left: 2px; }
.clock {
  width: 66px;
  margin: 0 14px 0 6px;
  font-size: 11px;
  letter-spacing: -.2px;
  line-height: 19px;
  text-align: center;
}
.notif {
  display: flex;
  width: 27px;
  height: 24px;
  position: relative;
}
.notif em {
  position: absolute;
  right: 3px;
  bottom: -3px;
  width: 16px;
  height: 16px;
  border: 1px solid #aaa;
  border-radius: 50%;
  background: #333;
  font-size: 10px;
  font-style: normal;
  line-height: 14px;
  text-align: center;
}
```
